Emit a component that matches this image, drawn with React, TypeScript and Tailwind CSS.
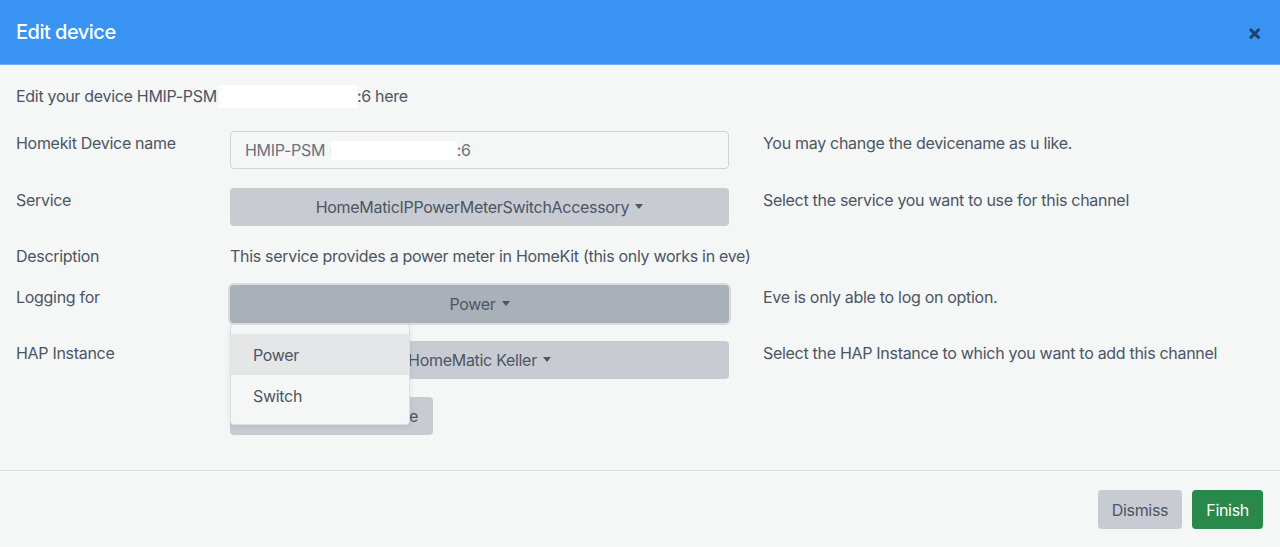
import React from "react";

const Caret = () => (
  <span className="inline-block ml-[6px] align-middle border-t-[5px] border-t-current border-x-[4px] border-x-transparent relative top-[-1px]" />
);

export default function App() {
  return (
    <div className="w-[1280px] h-[547px] bg-[#f5f6f6] text-[#4b5565] text-[16px] leading-[24px] tracking-[-0.3px] overflow-hidden" style={{ fontFamily: "Inter, 'Noto Sans', sans-serif" }}>
      <div className="h-[65px] bg-[#3893f2] border-b border-[#6aaef5] flex items-center justify-between px-4">
        <div className="text-white text-[20px] font-medium tracking-[-0.5px]">Edit device</div>
        <div className="text-[#1f3f66] text-[22px] font-bold leading-none mr-[2px]">×</div>
      </div>
      <div className="pt-[19px] px-4 pb-[35px] border-b border-[#dcdfe2]">
        <div className="mb-[23px] flex items-center">
          <span>Edit your device HMIP-PSM</span>
          <span className="inline-block bg-white w-[138px] h-[23px] ml-[2px]" />
          <span>:6 here</span>
        </div>
        <div className="flex mb-[19px]">
          <div className="w-[214px]">Homekit Device name</div>
          <div className="w-[499px] h-[38px] border border-[#ced3d8] rounded-[4px] flex items-center px-[14px] text-[#6b7280]">
            <span>HMIP-PSM (</span>
            <span className="inline-block bg-white w-[126px] h-[19px] ml-[-4px]" />
            <span>:6</span>
          </div>
          <div className="ml-[34px]">You may change the devicename as u like.</div>
        </div>
        <div className="flex mb-[18px]">
          <div className="w-[214px]">Service</div>
          <div className="w-[499px] h-[38px] rounded-[4px] bg-[#c8ccd2] flex items-center justify-center">
            HomeMaticIPPowerMeterSwitchAccessory<Caret />
          </div>
          <div className="ml-[34px]">Select the service you want to use for this channel</div>
        </div>
        <div className="flex mb-[17px]">
          <div className="w-[214px]">Description</div>
          <div>This service provides a power meter in HomeKit (this only works in eve)</div>
        </div>
        <div className="flex mb-[18px]">
          <div className="w-[214px]">Logging for</div>
          <div className="relative w-[499px]">
            <div className="h-[38px] rounded-[4px] bg-[#aab0b8] flex items-center justify-center ring-2 ring-[#d7dadf]">
              Power<Caret />
            </div>
            <div className="absolute left-0 top-[39px] w-[180px] h-[101px] bg-[#f5f6f6] border border-[#dcdfe2] rounded-[4px] shadow-[0_2px_6px_rgba(0,0,0,0.08)] z-10 py-[9px]">
              <div className="h-[41px] bg-[#e4e6e8] flex items-center pl-[22px]">Power</div>
              <div className="h-[41px] flex items-center pl-[22px]">Switch</div>
            </div>
          </div>
          <div className="ml-[34px]">Eve is only able to log on option.</div>
        </div>
        <div className="flex mb-[18px]">
          <div className="w-[214px]">HAP Instance</div>
          <div className="w-[499px] h-[38px] rounded-[4px] bg-[#c8ccd2] flex items-center justify-center">
            HomeMatic Keller<Caret />
          </div>
          <div className="ml-[34px]">Select the HAP Instance to which you want to add this channel</div>
        </div>
        <div className="flex">
          <div className="w-[214px]" />
          <div className="w-[203px] h-[38px] rounded-[4px] bg-[#c8ccd2] flex items-center justify-end pr-[15px]">
            Save
          </div>
        </div>
      </div>
      <div className="flex justify-end gap-[10px] pt-[19px] pr-[17px]">
        <div className="h-[39px] px-[14px] rounded-[4px] bg-[#c8ccd2] flex items-center">Dismiss</div>
        <div className="h-[39px] px-[14px] rounded-[4px] bg-[#28894a] text-white flex items-center">Finish</div>
      </div>
    </div>
  );
}
